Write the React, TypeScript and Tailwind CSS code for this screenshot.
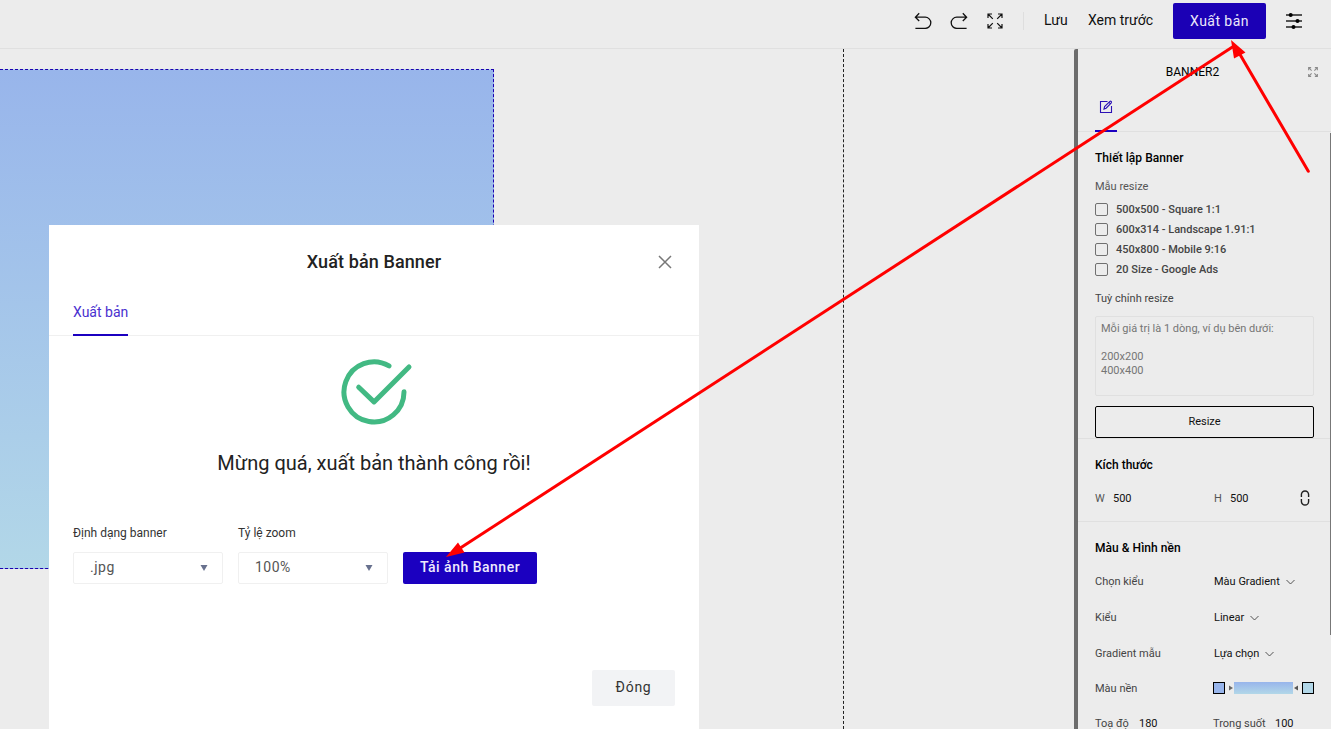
import React from "react";

const INK = "#111111";

function Undo({ flip = false }: { flip?: boolean }) {
  return (
    <svg width="18" height="17" viewBox="0 0 18 17" fill="none" stroke={INK} strokeWidth="1.3" className={flip ? "-scale-x-100" : ""}>
      <path d="M5.2 1.3 1.4 5.2 5.2 9M1.4 5.2H11.2a5.6 5.6 0 0 1 0 11.2H1.4" />
    </svg>
  );
}

function Expand({ size, color = INK, width = 1.2 }: { size: number; color?: string; width?: number }) {
  return (
    <svg width={size} height={size} viewBox="0 0 16 16" fill="none" stroke={color} strokeWidth={width}>
      <path d="M1 5V1h4M1 1l4.8 4.8M11 1h4v4M15 1l-4.8 4.8M1 11v4h4M1 15l4.8-4.8M15 11v4h-4M15 15l-4.8-4.8" />
    </svg>
  );
}

function Chevron() {
  return (
    <svg width="9" height="6" viewBox="0 0 9 6" fill="none" stroke="#444" strokeWidth="0.9">
      <path d="m.5 1 4 4 4-4" />
    </svg>
  );
}

function Header() {
  return (
    <header className="flex h-[49px] shrink-0 items-start justify-end border-b border-[#e0e0e0] pr-[28px] text-[14px] text-[#111]">
      <div className="flex h-[41px] items-center">
        <Undo />
        <div className="ml-[18px]"><Undo flip /></div>
        <div className="ml-[19px] pt-px"><Expand size={16} /></div>
        <div className="ml-[20px] h-[18px] w-px bg-[#dedede]" />
        <span className="ml-[20px] w-[24px] whitespace-nowrap">Lưu</span>
        <span className="ml-[20px] w-[65px] whitespace-nowrap">Xem trước</span>
        <button className="mt-px ml-[20px] h-[36px] w-[93px] rounded-[2px] bg-[#1b00b5] tracking-[0.45px] text-[#ece9fa]">Xuất bản</button>
        <svg className="ml-[19px]" width="18" height="17" viewBox="0 0 18 17" stroke="#222" strokeWidth="1.7" fill="#000">
          <path d="M1 3h16M1 9h16M1 15h16" />
          <g stroke="none"><circle cx="5.7" cy="3" r="2" /><circle cx="12.5" cy="9" r="2" /><circle cx="8.5" cy="15" r="2" /></g>
        </svg>
      </div>
    </header>
  );
}

function Select({ label, value }: { label: string; value: string }) {
  return (
    <div className="w-[150px]">
      <div className="h-[27px] text-[12px] leading-[16px] text-[#333]">{label}</div>
      <div className="flex h-[32px] items-center justify-between rounded-[2px] border border-[#f0f0f0] pr-[14px] pb-[2px] pl-[16px] text-[14px] tracking-[0.5px] text-[#555]">
        {value}
        <svg className="relative top-px" width="8" height="6" viewBox="0 0 8 6"><path d="M.5 0h7L4 6Z" fill="#68718e" /></svg>
      </div>
    </div>
  );
}

function PublishDialog() {
  return (
    <section className="absolute top-[225px] left-[49px] flex h-[504px] w-[650px] flex-col bg-white">
      <div className="relative flex h-[73px] items-center justify-center">
        <h2 className="text-[18px] font-medium tracking-[0.1px] text-[#222]">Xuất bản Banner</h2>
        <svg className="absolute top-[30px] right-[27px]" width="14" height="14" viewBox="0 0 14 14" stroke="#777" strokeWidth="1.5"><path d="m1 1 12 12M13 1 1 13" /></svg>
      </div>
      <div className="flex h-[38px] shrink-0 border-b border-[#f0f0f0] px-[24px]">
        <div className="h-[38px] w-[55px] border-b-2 border-[#1b00c0] text-[14px] leading-[28px] whitespace-nowrap text-[#4930cf]">Xuất bản</div>
      </div>
      <div className="flex flex-col items-center pt-[22px]">
        <svg className="ml-[2px]" width="76" height="70" viewBox="0 0 76 70" fill="none" stroke="#42b983" strokeWidth="5" strokeLinecap="round" strokeLinejoin="round">
          <path d="M52 7.9A30 30 0 1 0 67 33.8" /><path d="m21.7 29.2 15.3 14.7 35-35" />
        </svg>
        <p className="mt-[21px] text-[20px] leading-[28px] text-[#222]">Mừng quá, xuất bản thành công rồi!</p>
      </div>
      <div className="mt-[48px] flex items-end gap-[15px] px-[24px]">
        <Select label="Định dạng banner" value=".jpg" />
        <Select label="Tỷ lệ zoom" value="100%" />
        <button className="h-[32px] w-[134px] rounded-[2px] bg-[#1b00c0] pb-[2px] text-[14px] font-medium tracking-[0.5px] whitespace-nowrap text-[#eeeafd]">Tải ảnh Banner</button>
      </div>
      <div className="mt-auto mr-[24px] mb-[23px] flex justify-end">
        <button className="h-[36px] w-[83px] rounded-[2px] bg-[#f2f3f5] pb-[2px] text-[14px] tracking-[0.7px] text-[#333]">Đóng</button>
      </div>
    </section>
  );
}

function Row({ label, value }: { label: string; value: string }) {
  return (
    <div className="flex h-[36px] items-center">
      <span className="w-[119px] text-[#444]">{label}</span>
      <span className="mr-[6px]">{value}</span>
      <Chevron />
    </div>
  );
}

const sizes = ["500x500 - Square 1:1", "600x314 - Landscape 1.91:1", "450x800 - Mobile 9:16", "20 Size - Google Ads"];

function Sidebar() {
  return (
    <aside className="relative flex h-[680px] w-[257px] shrink-0 flex-col overflow-hidden rounded-tl-[2px] border-l-4 border-[#6c6c6c] text-[11px] leading-[14px] text-[#111]">
      <div className="relative flex h-[46px] shrink-0 items-center justify-center pr-[24px] text-[12px] text-black">
        BANNER2
        <div className="absolute top-[18px] right-[13px]"><Expand size={10} color="#8b8b8b" width={1.7} /></div>
      </div>
      <div className="flex h-[37px] shrink-0 border-b border-[#e0e0e0] pl-[17px]">
        <div className="h-[37px] w-[22px] border-b-2 border-[#1b00c0] pt-[5px] pl-[4px]">
          <svg width="14" height="14" viewBox="0 0 14 14" fill="none" stroke="#2b10b5" strokeWidth="1.1">
            <path d="M8.5 1.5h-7v11h11V6" /><path d="m5 9 .6-2.4 5.3-5.2q.7-.5 1.3.1t.1 1.3L7.1 8.2ZM10 2.4l1.5 1.5" />
          </svg>
        </div>
      </div>
      <div className="flex h-[307px] shrink-0 flex-col border-b border-[#e0e0e0] pr-[17px] pl-[17px]">
        <h3 className="mt-[19px] text-[12px] font-medium tracking-[0.05px] text-black">Thiết lập Banner</h3>
        <div className="mt-[15px] mb-[5px] text-[#555]">Mẫu resize</div>
        {sizes.map((s) => (
          <label key={s} className="flex h-[20px] items-center gap-[8px] font-medium text-[#444]">
            <span className="size-[13px] rounded-[2px] border border-[#707070]" /><span className="pt-px">{s}</span>
          </label>
        ))}
        <div className="mt-[13px] text-[#444]">Tuỳ chỉnh resize</div>
        <div className="mt-[10px] h-[80px] shrink-0 rounded-[2px] border border-[#e0e0e0] px-[5px] pt-[5px] whitespace-pre text-[#757575]">{"Mỗi giá trị là 1 dòng, ví dụ bên dưới:\n\n200x200\n400x400"}</div>
        <button className="mt-[10px] h-[32px] shrink-0 rounded-[2px] border border-black">Resize</button>
      </div>
      <div className="h-[83px] shrink-0 border-b border-[#e0e0e0] pl-[17px]">
        <h3 className="pt-[19px] text-[12px] font-medium text-black">Kích thước</h3>
        <div className="mt-[18px] flex h-[16px] items-center">
          <span className="w-[18px] pt-[2px] text-[#555]">W</span><span className="w-[101px] pt-[2px]">500</span>
          <span className="w-[16px] pt-[2px] text-[#555]">H</span><span className="pt-[2px]">500</span>
          <svg className="ml-[51px]" width="10" height="16" viewBox="0 0 10 16" fill="none" stroke="#222" strokeWidth="1.4">
            <path d="M1.4 7V4.6a3.6 3.6 0 0 1 7.2 0V7M1.4 9v2.4a3.6 3.6 0 0 0 7.2 0V9" />
          </svg>
        </div>
      </div>
      <div className="shrink-0 pl-[17px]">
        <h3 className="mt-[19px] mb-[9px] text-[12px] font-medium tracking-[0.05px] text-black">Màu &amp; Hình nền</h3>
        <Row label="Chọn kiểu" value="Màu Gradient" />
        <Row label="Kiểu" value="Linear" />
        <Row label="Gradient mẫu" value="Lựa chọn" />
        <div className="flex h-[34px] items-center">
          <span className="w-[118px] text-[#444]">Màu nền</span>
          <div className="flex items-center pb-[2px]">
            <span className="size-[12px] border border-black bg-[#98b5eb]" />
            <svg className="ml-[4px]" width="4" height="6" viewBox="0 0 4 6"><path d="M0 .5v5L4 3Z" fill="#666" /></svg>
            <span className="ml-[1px] h-[12px] w-[59px] bg-linear-to-b from-[#98b5eb] to-[#b2d7e8]" />
            <svg className="mr-[4px] ml-[1px]" width="4" height="6" viewBox="0 0 4 6"><path d="M4 .5v5L0 3Z" fill="#555" /></svg>
            <span className="size-[12px] border border-black bg-[#b2d7e8]" />
          </div>
        </div>
        <div className="mt-[11px] flex h-[14px] items-center whitespace-nowrap">
          <span className="w-[44px] text-[#444]">Toạ độ</span><span className="w-[74px]">180</span>
          <span className="w-[62px] text-[#444]">Trong suốt</span><span>100</span>
        </div>
      </div>
      <div className="absolute top-[84px] right-0 h-[502px] w-px bg-[#777]" />
    </aside>
  );
}

export default function App() {
  return (
    <main className="relative flex h-[729px] w-[1331px] flex-col overflow-hidden bg-[#ececec] font-['Roboto','Noto_Sans',sans-serif]">
      <Header />
      <div className="flex h-[680px]">
        <div className="w-[844px] shrink-0 border-r border-dashed border-[#222] pt-[20px]">
          <div className="h-[500px] w-[494px] border-y border-r border-dashed border-[#1b00b0] bg-linear-to-b from-[#98b5eb] to-[#b2d7e8]" />
        </div>
        <div className="w-[230px] shrink-0" />
        <Sidebar />
      </div>
      <PublishDialog />
      <svg className="pointer-events-none absolute inset-0" width="1331" height="729" fill="red" stroke="red">
        <path d="M1234 46 458 549.5" strokeWidth="3" fill="none" />
        <path d="M1308.3 171.3l-69-118" strokeWidth="3" strokeLinecap="round" fill="none" />
        <path stroke="none" d="m446 557 12-14.5 6.5 10ZM1231 40l14.5 12.5-11.5 6Z" />
      </svg>
    </main>
  );
}
